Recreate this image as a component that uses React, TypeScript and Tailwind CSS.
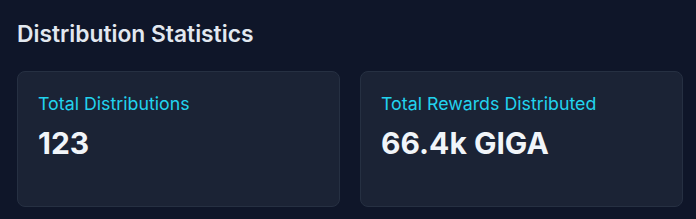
import React from "react";

export default function App() {
  const stats = [
    { label: "Total Distributions", value: "123" },
    { label: "Total Rewards Distributed", value: "66.4k GIGA" },
  ];
  return (
    <div
      className="w-[696px] h-[219px] bg-[#0f1629] pl-[17px] pr-[13px] pt-[20px]"
      style={{ fontFamily: "Inter, 'Noto Sans', sans-serif" }}
    >
      <h2 className="text-[22.8px] leading-[28px] font-semibold text-[#e2e8f0]">Distribution Statistics</h2>
      <div className="mt-[23px] grid grid-cols-2 gap-[20px]">
        {stats.map((s) => (
          <div
            key={s.label}
            className="h-[136px] rounded-lg border border-[#263042] bg-[#1b2335] px-[20px] pt-[20px]"
          >
            <div className="text-[17.8px] leading-[24px] text-[#22d3ee]">{s.label}</div>
            <div className="mt-[9px] text-[30px] leading-[36px] font-bold text-[#f1f5f9]">{s.value}</div>
          </div>
        ))}
      </div>
    </div>
  );
}
